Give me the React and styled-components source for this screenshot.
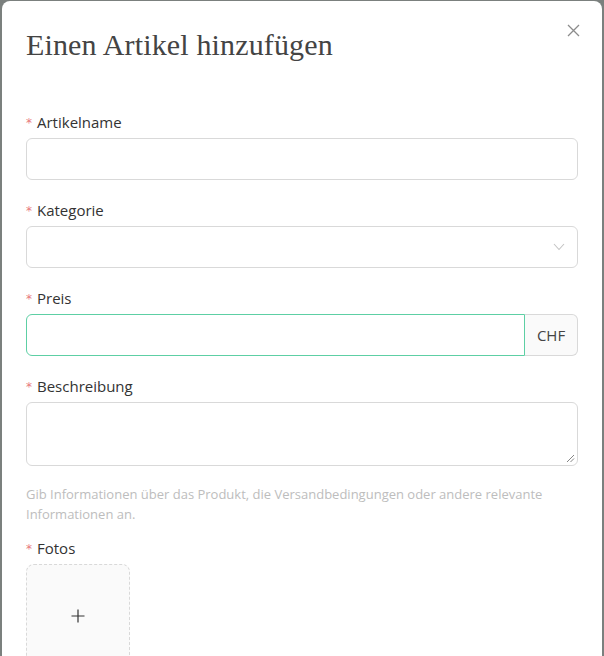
import React from "react";
import styled, { createGlobalStyle } from "styled-components";

const Global = createGlobalStyle`
  html, body { margin: 0; padding: 0; }
  body { background: #7d8280; font-family: "Open Sans", "Liberation Sans", sans-serif; }
  * { box-sizing: border-box; }
`;

const Backdrop = styled.div`
  width: 604px;
  height: 656px;
  overflow: hidden;
  background: #7b807e;
  padding: 1px 2px 0 2px;
`;

const Modal = styled.div`
  position: relative;
  background: #fff;
  border-radius: 8px 8px 0 0;
  height: 700px;
  padding: 24px 24px 0 24px;
`;

const Title = styled.h1`
  margin: 0;
  font-family: "Liberation Serif", "DejaVu Serif", serif;
  font-weight: 400;
  font-size: 30px;
  line-height: 40px;
  color: #444;
  letter-spacing: 0.15px;
`;

const Close = styled.button`
  position: absolute;
  top: 17px;
  right: 17px;
  width: 24px;
  height: 24px;
  border: 0;
  background: transparent;
  padding: 0;
  display: flex;
  align-items: center;
  justify-content: center;
  color: #8c8c8c;
`;

const Form = styled.div`
  margin-top: 46px;
  display: flex;
  flex-direction: column;
`;

const Item = styled.div`
  display: flex;
  flex-direction: column;
  margin-bottom: ${(p) => p.$mb ?? 19}px;
`;

const Label = styled.label`
  display: flex;
  align-items: center;
  font-size: 15px;
  line-height: 20px;
  height: 20px;
  color: #333;
  margin-bottom: 6px;
  margin-top: 1px;
`;

const Star = styled.span`
  color: #e8797c;
  font-size: 12px;
  margin-right: 5px;
  position: relative;
  top: 1px;
  font-family: "DejaVu Sans", sans-serif;
`;

const Input = styled.div`
  height: 42px;
  border: 1px solid #d9d9d9;
  border-radius: 6px;
  background: #fff;
  display: flex;
  align-items: center;
  justify-content: flex-end;
  padding-right: 12px;
`;

const Group = styled.div`
  display: flex;
  height: 42px;
`;

const GroupInput = styled.div`
  flex: 1;
  border: 1px solid #5dcfa4;
  border-radius: 6px 0 0 6px;
  background: #fff;
`;

const Addon = styled.div`
  width: 53px;
  border: 1px solid #d9d9d9;
  border-left: 0;
  border-radius: 0 6px 6px 0;
  background: #fafafa;
  display: flex;
  align-items: center;
  justify-content: center;
  font-size: 15px;
  color: #444;
`;

const TextArea = styled.div`
  position: relative;
  height: 64px;
  border: 1px solid #d9d9d9;
  border-radius: 6px;
  background: #fff;
`;

const Grip = styled.svg`
  position: absolute;
  right: 2px;
  bottom: 2px;
`;

const Help = styled.div`
  font-size: 13px;
  line-height: 20px;
  color: #bdbdbd;
  margin-bottom: 13px;
`;

const Upload = styled.div`
  width: 104px;
  height: 104px;
  border: 1px dashed #d9d9d9;
  border-radius: 8px;
  background: #fafafa;
  display: flex;
  align-items: center;
  justify-content: center;
`;

export default function App() {
  return (
    <>
      <Global />
      <Backdrop>
        <Modal>
          <Close aria-label="close">
            <svg width="13" height="13" viewBox="0 0 13 13">
              <path d="M1 1L12 12M12 1L1 12" stroke="#8c8c8c" strokeWidth="1.3" />
            </svg>
          </Close>
          <Title>Einen Artikel hinzufügen</Title>
          <Form>
            <Item>
              <Label><Star>*</Star>Artikelname</Label>
              <Input />
            </Item>
            <Item>
              <Label><Star>*</Star>Kategorie</Label>
              <Input>
                <svg width="12" height="8" viewBox="0 0 12 8">
                  <path d="M1 1L6 6.5L11 1" fill="none" stroke="#c4c4c4" strokeWidth="1.1" />
                </svg>
              </Input>
            </Item>
            <Item>
              <Label><Star>*</Star>Preis</Label>
              <Group>
                <GroupInput />
                <Addon>CHF</Addon>
              </Group>
            </Item>
            <Item $mb={18}>
              <Label><Star>*</Star>Beschreibung</Label>
              <TextArea>
                <Grip width="9" height="9" viewBox="0 0 9 9">
                  <path d="M8 1L1 8M8 4.5L4.5 8" stroke="#777" strokeWidth="0.9" />
                </Grip>
              </TextArea>
            </Item>
            <Help>
              Gib Informationen über das Produkt, die Versandbedingungen oder andere relevante Informationen an.
            </Help>
            <Item>
              <Label><Star>*</Star>Fotos</Label>
              <Upload>
                <svg width="14" height="14" viewBox="0 0 14 14">
                  <path d="M7 0.5V13.5M0.5 7H13.5" stroke="#333" strokeWidth="1.2" />
                </svg>
              </Upload>
            </Item>
          </Form>
        </Modal>
      </Backdrop>
    </>
  );
}
